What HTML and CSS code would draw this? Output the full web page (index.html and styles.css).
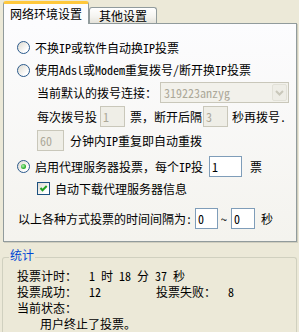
FILE: index.html
```html
<!DOCTYPE html>
<html lang="zh-CN">
<head>
<meta charset="utf-8">
<title>投票设置</title>
<link rel="stylesheet" href="styles.css">
</head>
<body>
<div class="tabs">
  <div class="tab tab-active">网络环境设置</div>
  <div class="tab tab-inactive">其他设置</div>
</div>
<div class="panel">
  <div class="row r1"><span class="radio"></span><span>不换IP或软件自动换IP投票</span></div>
  <div class="row r2"><span class="radio"></span><span>使用Adsl或Modem重复拨号/断开换IP投票</span></div>
  <div class="row r3 indent">
    <span>当前默认的拨号连接：</span>
    <div class="combo">
      <span class="combo-text">319223anzyg</span>
      <span class="combo-btn"><svg width="9" height="6" viewBox="0 0 9 6"><path d="M1 1 L4.5 4.5 L8 1" fill="none" stroke="#C9C7BA" stroke-width="2"/></svg></span>
    </div>
  </div>
  <div class="row r4 indent">
    <span>每次拨号投</span><span class="edit dis w25 gap-l3">1</span><span class="gap-l5">票，断开后隔</span><span class="edit dis w25 gap-l1">3</span><span class="gap-l4">秒再拨号.</span>
  </div>
  <div class="row r5 indent">
    <span class="edit dis w27">60</span><span class="gap-l6">分钟内IP重复即自动重拨</span>
  </div>
  <div class="row r6"><span class="radio on"></span><span>启用代理服务器投票，每个IP投</span><span class="edit w33 gap-l6">1</span><span class="gap-l8">票</span></div>
  <div class="row r7"><span class="check"><svg width="11" height="11" viewBox="0 0 11 11"><path d="M2.5 5 L4.5 7.2 L8.7 3" fill="none" stroke="#21A121" stroke-width="2"/></svg></span><span>自动下载代理服务器信息</span></div>
  <div class="row r8 interval">
    <span>以上各种方式投票的时间间隔为:</span><span class="edit w23 gap-l3">0</span><span class="gap-l3">~</span><span class="edit w24 gap-l4">0</span><span class="gap-l6">秒</span>
  </div>
</div>
<fieldset class="group">
  <legend class="group-title">统计</legend>
  <div class="stats">
    <div class="stat-grid">
      <span class="span2">投票计时：  1 时 18 分 37 秒</span>
      <span>投票成功：  12</span>
      <span>投票失败：  8</span>
    </div>
    <div class="state">当前状态：</div>
    <div class="state state-msg">用户终止了投票。</div>
  </div>
</fieldset>
</body>
</html>
```

FILE: styles.css
```css
html, body {
  margin: 0;
  height: 332px;
  overflow: hidden;
}
body {
  background: #ECE9D8;
  font-family: "Noto Sans Mono CJK SC", "Noto Sans CJK SC", sans-serif;
  font-size: 12px;
  line-height: 1;
  color: #000;
}

/* tabs */
.tabs {
  display: flex;
  align-items: flex-end;
  box-sizing: border-box;
  height: 24px;
  margin-bottom: -1px;
  padding-left: 3px;
  position: relative;
  z-index: 1;
}
.tab {
  box-sizing: border-box;
  text-align: center;
  border: 1px solid #919B9C;
  border-bottom: none;
  border-radius: 3px 3px 0 0;
  white-space: nowrap;
}
.tab-active {
  width: 86px;
  height: 23px;
  border-top: 3px solid #FFC83C;
  background: #FCFCFE;
  line-height: 20px;
}
.tab-inactive {
  width: 68px;
  height: 16px;
  margin-bottom: 1px;
  line-height: 15px;
  background: linear-gradient(#FFFFFF, #F4F3EF 60%, #E4E2DA);
}

/* panel */
.panel {
  box-sizing: border-box;
  width: 294px;
  height: 219px;
  margin-left: 3px;
  border: 1px solid #919B9C;
  box-shadow: 1px 1px 0 #D0CEBF;
  background: linear-gradient(#FCFCFE, #F4F3EE);
  padding-top: 14px;
  display: flex;
  flex-direction: column;
}
.row {
  display: flex;
  align-items: center;
  height: 21px;
  white-space: pre;
  flex: none;
}
.r1 { height: 19px; }
.r2 { height: 20px; margin-top: 3px; }
.r3 { margin-top: 2px; }
.r4 { margin-top: 3px; }
.r5 { margin-top: 3px; }
.r6 { margin-top: 5px; }
.r7 { height: 19px; margin-top: 2px; }
.r8 { margin-top: 10px; }
.indent { padding-left: 33px; }
.interval { padding-left: 14px; }

.gap-l1 { margin-left: 1px; }
.gap-l3 { margin-left: 3px; }
.gap-l4 { margin-left: 4px; }
.gap-l5 { margin-left: 5px; }
.gap-l6 { margin-left: 6px; }
.gap-l8 { margin-left: 8px; }

/* radio / checkbox */
.radio {
  flex: none;
  position: relative;
  box-sizing: border-box;
  width: 13px;
  height: 13px;
  margin: 0 5px 0 13px;
  border: 1px solid #2B5A8C;
  border-radius: 50%;
  background: linear-gradient(135deg, #DCD9CF, #FFFFFF 75%);
}
.radio.on::after {
  content: "";
  position: absolute;
  left: 3px;
  top: 3px;
  width: 5px;
  height: 5px;
  border-radius: 50%;
  background: radial-gradient(circle at 40% 40%, #B6F2B6, #2BB12B 60%, #1E9A1E);
}
.check {
  flex: none;
  display: flex;
  box-sizing: border-box;
  width: 13px;
  height: 13px;
  margin: 0 5px 0 33px;
  border: 1px solid #1C5180;
  background: linear-gradient(135deg, #DCD9CF, #FFFFFF 75%);
}

/* edits */
.edit {
  flex: none;
  box-sizing: border-box;
  height: 21px;
  border: 1px solid #7F9DB9;
  background: #FFFFFF;
  padding: 0 2px;
  line-height: 19px;
}
.edit.dis {
  border-color: #C9C7BA;
  background: #EFEEE7;
  color: #ACA899;
}
.w23 { width: 23px; }
.w24 { width: 24px; }
.w25 { width: 25px; }
.w27 { width: 27px; }
.w33 { width: 33px; }

.combo {
  flex: none;
  display: flex;
  align-items: center;
  box-sizing: border-box;
  width: 129px;
  height: 21px;
  margin-left: 3px;
  padding: 1px;
  border: 1px solid #C9C7BA;
  background: #F2F1EB;
  color: #ACA899;
}
.combo-text {
  flex: 1;
  padding-left: 2px;
}
.combo-btn {
  flex: none;
  display: flex;
  align-items: center;
  justify-content: center;
  box-sizing: border-box;
  width: 15px;
  height: 17px;
  border: 1px solid #E2E1D8;
  border-radius: 2px;
  background: #EEEDE6;
}

/* statistics group (open at the bottom edge of the window) */
.group {
  box-sizing: border-box;
  height: 83px;
  margin: 7px 2px 0;
  padding: 0;
  min-width: 0;
  border: 1px solid #D0D0BF;
  border-bottom: none;
  border-radius: 3px 3px 0 0;
}
.group-title {
  margin-left: 6px;
  padding: 0 1px 4px;
  line-height: 12px;
  color: #0046D5;
}
.stats {
  padding: 3px 0 0 14px;
  line-height: 16px;
}
.stat-grid {
  display: grid;
  grid-template-columns: 139px auto;
  white-space: pre;
}
.span2 { grid-column: 1 / 3; }
.state-msg {
  padding-left: 23px;
}
```
